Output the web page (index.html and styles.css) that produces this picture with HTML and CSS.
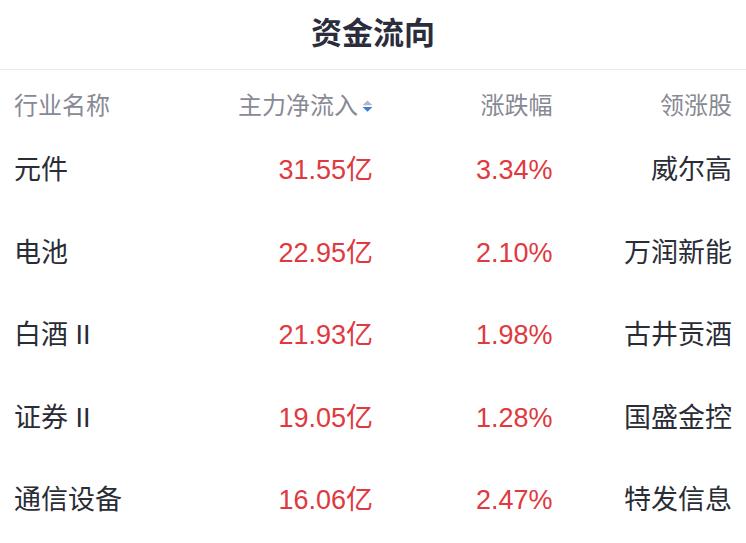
FILE: index.html
```html
<!DOCTYPE html>
<html lang="zh">
<head>
<meta charset="utf-8">
<link rel="stylesheet" href="styles.css">
</head>
<body>
<div class="page">
  <div class="title">资金流向</div>
  <div class="row head">
    <div class="c c1">行业名称</div>
    <div class="c c2">主力净流入<svg class="sort" width="11" height="13" viewBox="0 0 11 13"><polygon points="5.5,0.5 10.5,5.2 0.5,5.2" fill="#b3b6be"/><polygon points="0.5,7 10.5,7 5.5,11.8" fill="#3b7ddd"/></svg></div>
    <div class="c c3">涨跌幅</div>
    <div class="c c4">领涨股</div>
  </div>
  <div class="row">
    <div class="c c1">元件</div>
    <div class="c c2 up">31.55亿</div>
    <div class="c c3 up">3.34%</div>
    <div class="c c4">威尔高</div>
  </div>
  <div class="row">
    <div class="c c1">电池</div>
    <div class="c c2 up">22.95亿</div>
    <div class="c c3 up">2.10%</div>
    <div class="c c4">万润新能</div>
  </div>
  <div class="row">
    <div class="c c1">白酒 II</div>
    <div class="c c2 up">21.93亿</div>
    <div class="c c3 up">1.98%</div>
    <div class="c c4">古井贡酒</div>
  </div>
  <div class="row">
    <div class="c c1">证券 II</div>
    <div class="c c2 up">19.05亿</div>
    <div class="c c3 up">1.28%</div>
    <div class="c c4">国盛金控</div>
  </div>
  <div class="row">
    <div class="c c1">通信设备</div>
    <div class="c c2 up">16.06亿</div>
    <div class="c c3 up">2.47%</div>
    <div class="c c4">特发信息</div>
  </div>
</div>
</body>
</html>
```
FILE: styles.css
```css
html, body {
  margin: 0;
  padding: 0;
  background: #ffffff;
}
body {
  font-family: "Liberation Sans", "Noto Sans CJK SC", sans-serif;
  color: #2a2c36;
}
.page {
  width: 746px;
}
.title {
  height: 70px;
  box-sizing: border-box;
  border-bottom: 1px solid #e9e9ec;
  display: flex;
  align-items: center;
  justify-content: center;
  font-size: 31px;
  font-weight: 700;
  color: #2b2d3b;
  padding-bottom: 9px;
}
.row {
  display: grid;
  grid-template-columns: repeat(4, 1fr);
  padding: 0 14px;
  height: 82.5px;
  align-items: center;
  font-size: 27px;
  line-height: 32px;
}
.row.head {
  height: 59px;
  align-items: start;
  padding-top: 22px;
  box-sizing: border-box;
  font-size: 24px;
  color: #878a94;
  line-height: 28px;
}
.c {
  white-space: nowrap;
}
.c1 { text-align: left; }
.c2, .c3, .c4 { text-align: right; }
.c2 {
  display: flex;
  justify-content: flex-end;
  align-items: center;
}
.up { color: #e0393e; }
.sort {
  margin-left: 4px;
  margin-top: 1px;
}
```
